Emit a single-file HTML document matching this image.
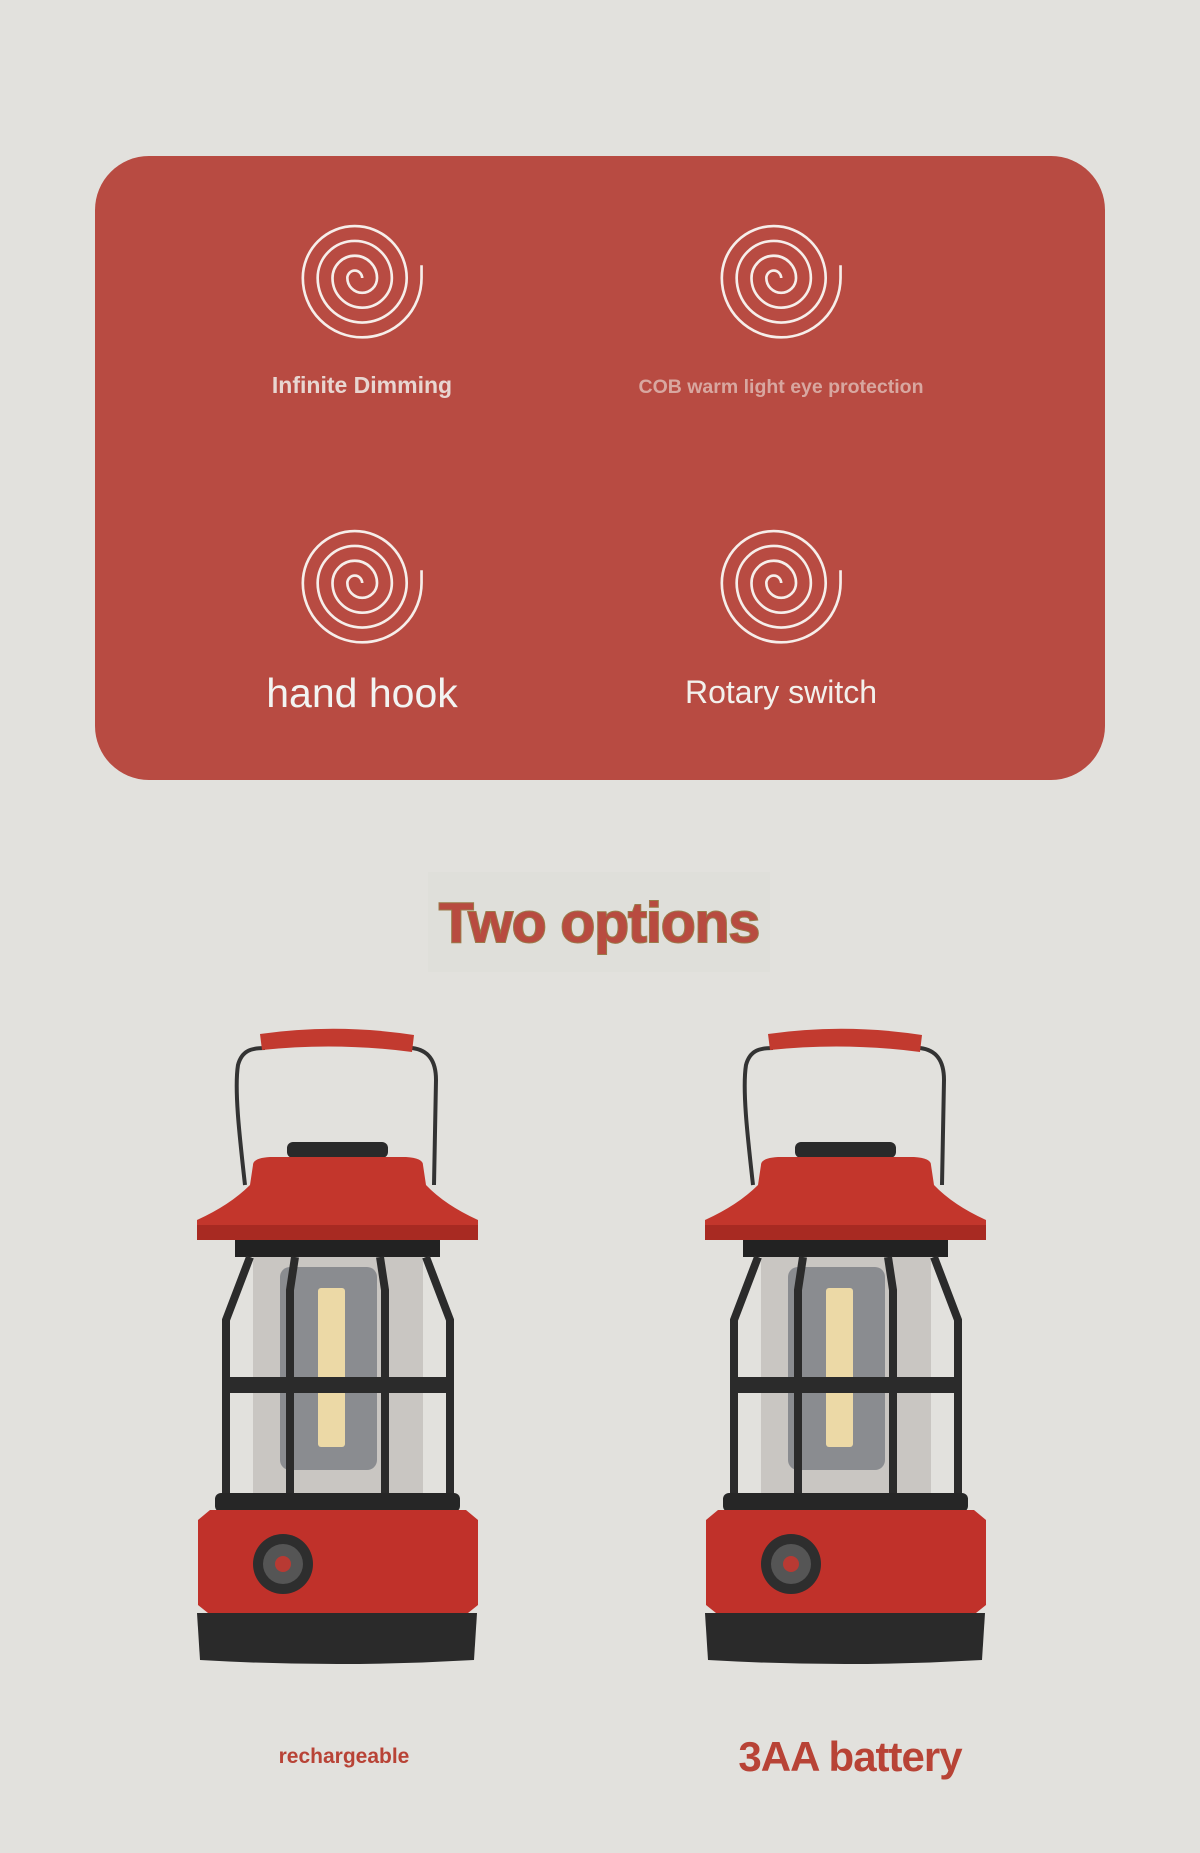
<!DOCTYPE html>
<html><head><meta charset="utf-8"><style>
html,body{margin:0;padding:0;background:#e2e1dd;}
body{width:1200px;height:1853px;position:relative;overflow:hidden;font-family:"Liberation Sans",sans-serif;}
.card{position:absolute;left:95px;top:156px;width:1010px;height:624px;background:#b84b42;border-radius:54px;}
.lbl{position:absolute;transform:translateX(-50%);white-space:nowrap;}
</style></head><body>
<div class="card"></div>
<svg width="1200" height="1853" style="position:absolute;left:0;top:0">
<defs>
<g id="sp" fill="none" stroke="#f6eeea" stroke-width="2.5">
<path transform="scale(1.06)" d="M3,0 A7,7 0 0 0 -11,0 A14,14 0 0 0 17,0 A21,21 0 0 0 -25,0 A28,28 0 0 0 31,0 A35,35 0 0 0 -39,0 A42,42 0 0 0 45,0 A49,49 0 0 0 -53,0 A56,56 0 0 0 59,0 L59,-12"/>
</g>
<g id="lan">
<path d="M55,165 C50,120 44,70 48,45 C52,30 62,28 75,28" fill="none" stroke="#333" stroke-width="4"/>
<path d="M222,28 C238,30 246,40 246,60 L244,165" fill="none" stroke="#333" stroke-width="4"/>
<path d="M70,14 Q146,3 224,15 L222,32 Q146,22 72,30 Z" fill="#c23a2f"/>
<rect x="97" y="122" width="101" height="16" rx="6" fill="#2a2a2a"/>
<path d="M63,145 Q63,138 80,137 L216,137 Q233,138 233,145 L236,165 Q255,185 288,200 L288,220 L7,220 L7,200 Q40,185 60,165 Z" fill="#c3362c"/>
<path d="M7,205 L288,205 L288,220 L7,220 Z" fill="#a82a22"/>
<rect x="45" y="220" width="205" height="17" fill="#222"/>
<rect x="63" y="237" width="170" height="240" fill="#c9c6c2"/>
<rect x="90" y="247" width="97" height="203" rx="10" fill="#8a8c90"/>
<rect x="128" y="268" width="27" height="159" rx="3" fill="#ecd9a6"/>
<path d="M60,237 L36,300 L36,475 M105,237 L100,270 L100,475 M190,237 L195,270 L195,475 M236,237 L260,300 L260,475" fill="none" stroke="#2b2b2b" stroke-width="8"/>
<rect x="32" y="357" width="230" height="16" fill="#2b2b2b"/>
<rect x="25" y="473" width="245" height="19" rx="6" fill="#262626"/>
<path d="M8,500 L20,490 L276,490 L288,500 L288,585 L278,593 L18,593 L8,585 Z" fill="#c0312a"/>
<circle cx="93" cy="544" r="30" fill="#2e2e2e"/>
<circle cx="93" cy="544" r="20" fill="#555"/>
<circle cx="93" cy="544" r="8" fill="#b83a33"/>
<path d="M7,593 L287,593 L284,640 Q147,648 10,640 Z" fill="#2a2a2a"/>
</g>
</defs>
<use href="#sp" x="359" y="278"/>
<use href="#sp" x="778" y="278"/>
<use href="#sp" x="359" y="583"/>
<use href="#sp" x="778" y="583"/>
<rect x="428" y="872" width="342" height="100" fill="#dfdfda"/>
<text x="599" y="942" text-anchor="middle" font-family="Liberation Sans" font-weight="bold" font-size="57" fill="#b84b40" stroke="#9b7a4a" stroke-width="2" paint-order="stroke" letter-spacing="-1">Two options</text>
<use href="#lan" x="190" y="1020"/>
<use href="#lan" x="698" y="1020"/>
</svg>
<div class="lbl" style="left:362px;top:372px;font-size:23px;font-weight:bold;color:#e8d6d1">Infinite Dimming</div>
<div class="lbl" style="left:781px;top:376px;font-size:19.5px;font-weight:bold;color:#d8a7a0">COB warm light eye protection</div>
<div class="lbl" style="left:362px;top:670px;font-size:41px;color:#f2f4f2">hand hook</div>
<div class="lbl" style="left:781px;top:674px;font-size:32px;color:#f2f0ec">Rotary switch</div>
<div class="lbl" style="left:344px;top:1745px;font-size:21px;font-weight:bold;color:#b84336">rechargeable</div>
<div class="lbl" style="left:850px;top:1733px;font-size:42px;font-weight:bold;color:#b84336;letter-spacing:-1px">3AA battery</div>
</body></html>
